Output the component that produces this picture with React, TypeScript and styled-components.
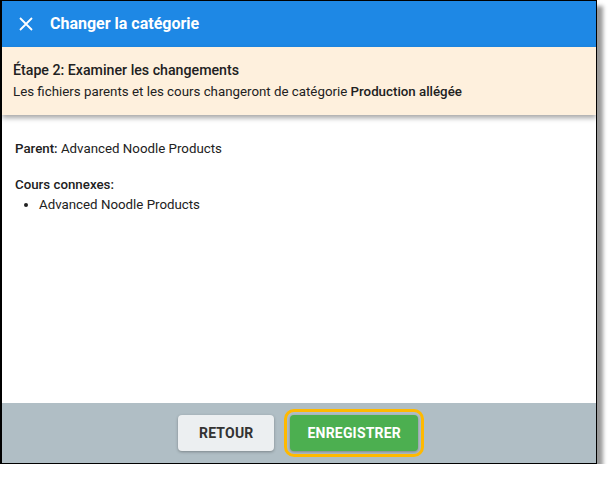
import React from 'react';
import styled, { createGlobalStyle } from 'styled-components';

const GlobalStyle = createGlobalStyle`
  html, body {
    margin: 0;
    padding: 0;
    background: #fff;
  }
  * {
    box-sizing: border-box;
  }
`;

const Frame = styled.div`
  width: 597px;
  height: 464px;
  display: flex;
  flex-direction: column;
  border: 1px solid #000;
  border-left-width: 2px;
  background: #fff;
  box-shadow: 6px 6px 4px rgba(0, 0, 0, 0.4);
  font-family: Roboto, 'Liberation Sans', sans-serif;
  color: #212121;
  overflow: hidden;
`;

const Header = styled.div`
  height: 46px;
  flex: none;
  display: flex;
  align-items: center;
  gap: 17px;
  padding-left: 17px;
  background: #1e88e5;
  color: #fff;
`;

const CloseButton = styled.button`
  width: 14px;
  height: 14px;
  padding: 0;
  border: 0;
  background: transparent;
  color: #fff;
  display: flex;
  align-items: center;
  justify-content: center;
  cursor: pointer;
`;

const Title = styled.h1`
  margin: 0;
  font-size: 16px;
  font-weight: 700;
  padding-bottom: 1px;
`;

const StepBanner = styled.div`
  height: 68px;
  flex: none;
  display: flex;
  flex-direction: column;
  justify-content: center;
  gap: 4px;
  padding: 0 11px 2px;
  background: #fef0dd;
  box-shadow: 0 3px 5px rgba(0, 0, 0, 0.35);
  position: relative;
  z-index: 1;
`;

const StepTitle = styled.div`
  font-size: 14.2px;
  font-weight: 500;
  line-height: 18px;
`;

const StepText = styled.div`
  font-size: 13.3px;
  line-height: 17px;
  b {
    font-weight: 500;
  }
`;

const Content = styled.div`
  flex: 1;
  padding: 25px 13px 0;
  font-size: 13.3px;
  line-height: 18px;
`;

const Line = styled.div<{ $gap?: number }>`
  margin-bottom: ${(p) => p.$gap ?? 0}px;
  b {
    font-weight: 500;
  }
`;

const List = styled.ul`
  margin: 2px 0 0;
  padding-left: 24px;
  li {
    line-height: 18px;
  }
`;

const Footer = styled.div`
  height: 60px;
  flex: none;
  display: flex;
  align-items: center;
  justify-content: center;
  gap: 16px;
  background: #b0bec5;
  padding-right: 2px;
`;

const Button = styled.button<{ $primary?: boolean }>`
  height: 36px;
  padding: 0 ${(p) => (p.$primary ? 17 : 21)}px;
  border: 0;
  border-radius: 4px;
  font-family: Roboto, 'Liberation Sans', sans-serif;
  font-size: 14px;
  font-weight: 700;
  letter-spacing: 0.2px;
  background: ${(p) => (p.$primary ? '#4caf50' : '#eceff1')};
  color: ${(p) => (p.$primary ? '#fff' : '#333')};
  box-shadow: 0 1px 3px rgba(0, 0, 0, 0.3);
  outline: ${(p) => (p.$primary ? '3px solid #ffb900' : 'none')};
  outline-offset: 3px;
  cursor: pointer;
`;

export default function App() {
  return (
    <>
      <GlobalStyle />
      <Frame>
        <Header>
          <CloseButton aria-label="Fermer">
            <svg width="14" height="14" viewBox="0 0 14 14">
              <path d="M1 1L13 13M13 1L1 13" stroke="currentColor" strokeWidth="1.8" />
            </svg>
          </CloseButton>
          <Title>Changer la catégorie</Title>
        </Header>
        <StepBanner>
          <StepTitle>Étape 2: Examiner les changements</StepTitle>
          <StepText>
            Les fichiers parents et les cours changeront de catégorie <b>Production allégée</b>
          </StepText>
        </StepBanner>
        <Content>
          <Line $gap={18}>
            <b>Parent:</b> Advanced Noodle Products
          </Line>
          <Line>
            <b>Cours connexes:</b>
          </Line>
          <List>
            <li>Advanced Noodle Products</li>
          </List>
        </Content>
        <Footer>
          <Button>RETOUR</Button>
          <Button $primary>ENREGISTRER</Button>
        </Footer>
      </Frame>
    </>
  );
}
